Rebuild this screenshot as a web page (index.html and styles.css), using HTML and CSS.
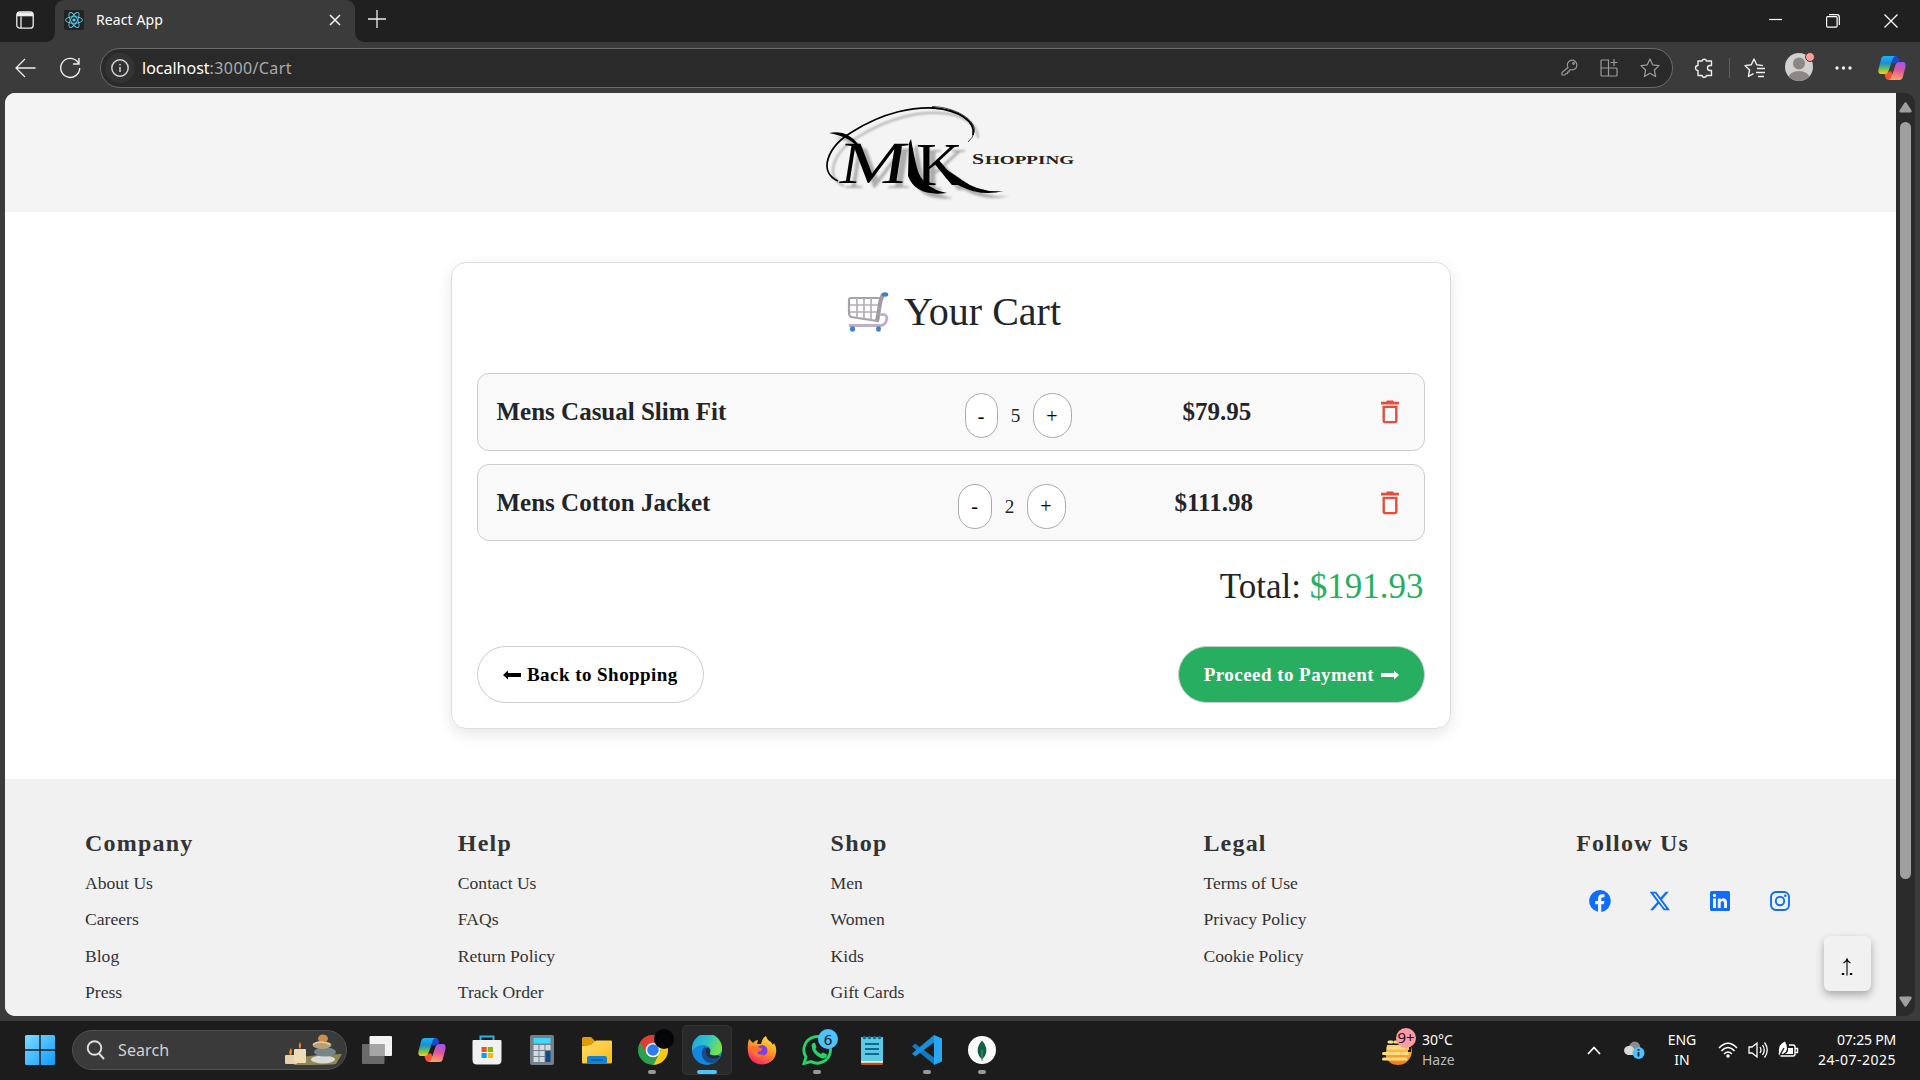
FILE: index.html
```html
<!DOCTYPE html>
<html lang="en">
<head>
<meta charset="utf-8">
<title>React App</title>
<link rel="stylesheet" href="styles.css">
</head>
<body>
<svg width="0" height="0" class="defs" aria-hidden="true">
  <defs>
    <linearGradient id="cpA" x1="0" y1="0" x2="0" y2="1"><stop offset="0" stop-color="#18b4f0"/><stop offset=".4" stop-color="#1a8ed8"/><stop offset=".65" stop-color="#55b86a"/><stop offset="1" stop-color="#f6d211"/></linearGradient>
    <linearGradient id="cpB" x1=".6" y1="0" x2=".4" y2="1"><stop offset="0" stop-color="#9a58f0"/><stop offset=".45" stop-color="#e2559c"/><stop offset="1" stop-color="#ffa45c"/></linearGradient>
    <linearGradient id="win" x1="0" y1="0" x2="1" y2="1"><stop offset="0" stop-color="#7edcff"/><stop offset="1" stop-color="#0f9bff"/></linearGradient>
    <linearGradient id="fold" x1="0" y1="0" x2="1" y2="1"><stop offset="0" stop-color="#ffdc6b"/><stop offset="1" stop-color="#fbbc14"/></linearGradient>
    <linearGradient id="edgeG" x1="0" y1="0" x2="1" y2=".4"><stop offset="0" stop-color="#1fa0ea"/><stop offset=".55" stop-color="#2cc3c9"/><stop offset="1" stop-color="#74e24e"/></linearGradient>
    <linearGradient id="fx" x1=".8" y1="0" x2=".3" y2="1"><stop offset="0" stop-color="#ffe847"/><stop offset=".45" stop-color="#ff9a22"/><stop offset="1" stop-color="#f71f6b"/></linearGradient>
    <linearGradient id="sun" x1="0" y1="0" x2="0" y2="1"><stop offset="0" stop-color="#ffd25a"/><stop offset="1" stop-color="#ee7a12"/></linearGradient>
    <symbol id="copilot" viewBox="0 0 28 26">
      <path d="M17 1 C20 1 20.500 3 21.500 6 L15 9 L11 1Z" fill="#1b49cf"/>
      <path d="M11 25 C8 25 7 22 6.500 19 L13 16 L17 25Z" fill="#f4542f"/>
      <path d="M6.500 1 H18 C15.500 1 14.800 3 14 6 L10.500 16 C9.800 18 9 19 6.500 19 H3.500 C.5 19 0 17 .6 14 L3 4.500 C3.600 2 4.600 1 6.500 1Z" fill="url(#cpA)"/>
      <path d="M21.500 25 H10 C12.500 25 13.200 23 14 20 L17.500 10 C18.200 8 19 7 21.500 7 H24.500 C27.500 7 28 9 27.400 12 L25 21.500 C24.400 24 23.400 25 21.500 25Z" fill="url(#cpB)"/>
    </symbol>
    <symbol id="trash" viewBox="0 0 18 24">
      <path d="M0 1.800 H5 L6 .6 H12 L13 1.800 H18 V4.500 H0Z M1.500 5.800 H16.500 V20.500 Q16.500 23.300 13.900 23.300 H4.100 Q1.500 23.300 1.500 20.500Z M3.900 8 V21 H14.100 V8Z" fill="#e74c3c" fill-rule="evenodd"/>
    </symbol>
  </defs>
</svg>

<div class="tabstrip">
  <svg class="tab-actions" width="18" height="18" viewBox="0 0 18 18" fill="none" stroke="#eee" stroke-width="1.300"><rect x=".8" y=".8" width="16.400" height="16.400" rx="3"/><path d="M5 5.500V17"/><path d="M1 3.300H17" stroke-width="4"/></svg>
  <div class="tab">
    <svg class="favicon" width="20" height="20" viewBox="0 0 20 20"><rect width="20" height="20" rx="2" fill="#222"/><g fill="none" stroke="#5ccfee" stroke-width=".9"><ellipse cx="10" cy="10" rx="8.500" ry="3.300"/><ellipse cx="10" cy="10" rx="8.500" ry="3.300" transform="rotate(60 10 10)"/><ellipse cx="10" cy="10" rx="8.500" ry="3.300" transform="rotate(120 10 10)"/></g><circle cx="10" cy="10" r="1.600" fill="#5ccfee"/></svg>
    <span class="tab-title">React App</span>
    <svg class="tab-close" width="12" height="12" viewBox="0 0 12 12" stroke="#f4f4f4" stroke-width="1.500"><path d="M1 1L11 11M11 1L1 11"/></svg>
  </div>
  <svg class="newtab" width="18" height="18" viewBox="0 0 18 18" stroke="#eee" stroke-width="1.300"><path d="M9 0V18M0 9H18"/></svg>
  <div class="winctl">
    <svg width="13" height="14" viewBox="0 0 13 14" stroke="#fff" stroke-width="1.200"><path d="M0 5.500H13"/></svg>
    <svg width="14" height="14" viewBox="0 0 14 14" fill="none" stroke="#fff" stroke-width="1.200"><rect x=".6" y="2.600" width="10.500" height="10.500" rx="1"/><path d="M3 .7H11Q13.300 .7 13.300 3V11"/></svg>
    <svg width="14" height="14" viewBox="0 0 14 14" stroke="#fff" stroke-width="1.300"><path d="M.5 .5L13.500 13.500M13.500 .5L.5 13.500"/></svg>
  </div>
</div>

<div class="toolbar">
  <svg class="back" width="21" height="20" viewBox="0 0 21 20" fill="none" stroke="#eee" stroke-width="1.300"><path d="M20.500 10H1M10 1L1 10L10 19"/></svg>
  <svg class="reload" width="21" height="22" viewBox="0 0 21 22" fill="none" stroke="#eee" stroke-width="1.400"><path d="M19.700 11A9.500 9.500 0 1 1 17.500 4.800L19 6.500M19 1V7H13"/></svg>
  <div class="address">
    <span class="info"><svg width="18" height="18" viewBox="0 0 18 18" fill="none" stroke="#ddd" stroke-width="1.400"><circle cx="9" cy="9" r="8.200"/><path d="M9 8V13M9 5V6.500"/></svg></span>
    <span class="url"><b>localhost</b>:3000/Cart</span>
    <span class="addr-icons">
      <svg width="17" height="17" viewBox="0 0 17 17" fill="none" stroke="#999" stroke-width="1.200"><path d="M7 8.500A4.800 4.800 0 1 1 9.500 10.500L8 11.500V13H6.500V14.500H5L4 16H1V13.500Z"/><circle cx="12.500" cy="4.500" r=".8"/></svg>
      <svg width="18" height="18" viewBox="0 0 18 18" fill="none" stroke="#999" stroke-width="1.200"><path d="M1 9V2Q1 1 2 1H8.500V17H2Q1 17 1 16V9H16Q17 9 17 10V16Q17 17 16 17H8.500M14 0V7M10.500 3.500H17.500"/></svg>
      <svg width="20" height="20" viewBox="0 0 20 20" fill="none" stroke="#999" stroke-width="1.300" stroke-linejoin="round"><path d="M10 1L12.700 6.800L19 7.600L14.400 12L15.600 18.500L10 15.300L4.400 18.500L5.600 12L1 7.600L7.300 6.800Z"/></svg>
    </span>
  </div>
  <svg class="puzzle" width="19" height="20" viewBox="0 0 19 20" fill="none" stroke="#eee" stroke-width="1.400" stroke-linejoin="round"><path d="M4 3H8A2.300 2.300 0 0 1 12.500 3H17.500V7.500H16A2.500 2.500 0 0 0 16 12.500H17.500V17.500H12.500A2.300 2.300 0 0 1 8 17.500H4V12.500A2.500 2.500 0 0 1 4 7.500Z"/></svg>
  <i class="sep"></i>
  <svg class="favs" width="21" height="20" viewBox="0 0 21 20" fill="none" stroke="#eee" stroke-width="1.400" stroke-linejoin="round"><path d="M19 7.600L12.700 6.800L10 1L7.300 6.800L1 7.600L5.600 12L4.400 18.500L9.500 15.600M13 10.500H21M12 14.500H21M14 18.500H20" /></svg>
  <svg class="avatar" width="30" height="30" viewBox="0 0 30 30"><clipPath id="av"><circle cx="14" cy="16" r="14"/></clipPath><g clip-path="url(#av)"><rect width="30" height="30" fill="#d2d0ce"/><circle cx="14" cy="12.500" r="6" fill="#8a8785"/><ellipse cx="14" cy="27" rx="10.500" ry="7" fill="#8a8785"/></g><circle cx="25" cy="6" r="4.500" fill="#ff9e9b" stroke="#3b3b3b"/></svg>
  <svg class="dots" width="17" height="4" viewBox="0 0 17 4" fill="#eee"><circle cx="2" cy="2" r="1.700"/><circle cx="8.500" cy="2" r="1.700"/><circle cx="15" cy="2" r="1.700"/></svg>
  <svg class="cp" width="28" height="26"><use href="#copilot"/></svg>
</div>

<div class="viewport">
  <div class="page">
    <header class="site-header">
      <svg class="logo" width="260" height="110" viewBox="820 95 260 110">
        <defs><filter id="soft" x="-10%" y="-10%" width="130%" height="130%"><feGaussianBlur stdDeviation="1.100"/></filter>
        <g id="mark">
          <path d="M829 133Q847 129 858 144L862 152Q852 137 829 133Z"/>
          <path d="M909 143L911 139Q914 156 917 168Q922 188 947 193Q916 197 908 176Z"/>
          <path d="M938 165Q948 170 962 180Q979 193 1004 191Q981 197 960 186L946 178Z"/>
          <text transform="translate(837 182.500) skewX(-9) scale(1.270 1)" font-size="60">M</text>
          <text transform="translate(916 184.500) scale(1.050 1)" font-size="62">K</text>
        </g></defs>
        <g class="logo-shadow" filter="url(#soft)">
          <use href="#mark" x="6" y="5"/>
          <path d="M844 186C824 177 833 152 858 137C891 116 921 112 940 113C962 114 978 124 978 138" fill="none" stroke-width="2"/>
        </g>
        <use href="#mark"/>
        <path d="M838 181C818 172 827 147 852 132C885 111 915 107 934 108C958 110 976 121 973 135" fill="none" stroke="#000" stroke-width="1.800"/>
        <path d="M932 106.500C955 107 977 120 974 132Q973 138 968 142" fill="none" stroke="#000" stroke-width=".7"/>
        <g class="logo-word"><text x="972" y="163.500" font-size="15" textLength="12" lengthAdjust="spacingAndGlyphs">S</text><text x="985" y="163.500" font-size="12.500" textLength="89" lengthAdjust="spacingAndGlyphs">HOPPING</text></g>
      </svg>
    </header>

    <main class="cart">
      <h1 class="cart-title">
        <svg class="cart-icon" width="42" height="40" viewBox="0 0 42 40" fill="none">
          <path d="M4 6H34L31 29L4 25Q2 24 2 20V8Q2 6 4 6Z" stroke="#a7a1aa" stroke-width="2.200"/>
          <path d="M10 6V26M17 6V27M24 6V28M3 13H32M3 20H31" stroke="#b5afb8" stroke-width="1.700"/>
          <path d="M36 2L33.500 9L30 29" stroke="#a19ba5" stroke-width="4"/>
          <path d="M33 23Q39 21 40 26Q39 33 34 33.500H2" stroke="#bdb0c8" stroke-width="2.800"/>
          <ellipse cx="38" cy="2.500" rx="3.300" ry="2.200" fill="#3f7fcb"/><ellipse cx="5.500" cy="37" rx="2.600" ry="2.800" fill="#3f7fcb"/><ellipse cx="31.500" cy="37" rx="2.400" ry="2.800" fill="#3f7fcb"/>
        </svg>
        Your Cart
      </h1>
      <ul class="items">
        <li class="item item-first">
          <span class="name">Mens Casual Slim Fit</span>
          <span class="qty"><button>-</button><span>5</span><button>+</button></span>
          <span class="price">$79.95</span>
          <svg class="remove" width="18" height="24"><use href="#trash"/></svg>
        </li>
        <li class="item item-second">
          <span class="name">Mens Cotton Jacket</span>
          <span class="qty"><button>-</button><span>2</span><button>+</button></span>
          <span class="price">$111.98</span>
          <svg class="remove" width="18" height="24"><use href="#trash"/></svg>
        </li>
      </ul>
      <h2 class="total">Total: <span>$191.93</span></h2>
      <div class="actions">
        <button class="btn"><svg width="18" height="10" viewBox="0 0 18 10"><path d="M0 5L5 .5V3H18V7H5V9.500Z"/></svg>Back to Shopping</button>
        <button class="btn btn-pay">Proceed to Payment<svg width="18" height="10" viewBox="0 0 18 10"><path d="M18 5L13 .5V3H0V7H13V9.500Z"/></svg></button>
      </div>
    </main>

    <footer class="site-footer">
      <section><h3>Company</h3><a>About Us</a><a>Careers</a><a>Blog</a><a>Press</a></section>
      <section><h3>Help</h3><a>Contact Us</a><a>FAQs</a><a>Return Policy</a><a>Track Order</a></section>
      <section><h3>Shop</h3><a>Men</a><a>Women</a><a>Kids</a><a>Gift Cards</a></section>
      <section><h3>Legal</h3><a>Terms of Use</a><a>Privacy Policy</a><a>Cookie Policy</a></section>
      <section><h3>Follow Us</h3>
        <div class="social">
          <svg width="24" height="24" viewBox="0 0 24 24"><path d="M12 1A11 11 0 0 0 10 22.800V15.300H7.200V12H10V9.600C10 6.800 11.700 5.300 14.200 5.300C15.400 5.300 16.500 5.500 16.500 5.500V8.200H15.200C13.800 8.200 13.300 9.100 13.300 10V12H16.400L15.900 15.300H13.300V22.900A11 11 0 0 0 12 1Z"/></svg>
          <svg width="24" height="24" viewBox="0 0 24 24"><path d="M17.700 2.700H20.800L14 10.500L22 21.300H15.700L10.800 14.800L5.100 21.300H2L9.300 13L1.700 2.700H8.100L12.600 8.600ZM16.600 19.400H18.300L7.200 4.500H5.400Z"/></svg>
          <svg width="24" height="24" viewBox="0 0 24 24"><path fill-rule="evenodd" d="M3.500 2H20.500Q22 2 22 3.500V20.500Q22 22 20.500 22H3.500Q2 22 2 20.500V3.500Q2 2 3.500 2ZM5 9.500V19H8V9.500ZM6.500 4.800A1.700 1.700 0 1 0 6.500 8.200A1.700 1.700 0 1 0 6.500 4.800ZM9.800 9.500V19H12.700V14.300C12.700 11.200 16 11.500 16 14.300V19H19V13.200C19 8.500 14.200 8.500 12.700 10.800V9.500Z"/></svg>
          <svg width="24" height="24" viewBox="0 0 24 24"><g fill="none" stroke="#0d6efd" stroke-width="1.900"><rect x="3" y="3" width="18" height="18" rx="5"/><circle cx="12" cy="12" r="4.200"/></g><circle cx="17.300" cy="6.700" r="1.300"/></svg>
        </div>
      </section>
    </footer>
    <button class="to-top"><svg width="12" height="18" viewBox="0 0 12 18" fill="none" stroke="#000"><path d="M6 17.500V1M2.500 5Q5 4 6 1Q7 4 9.500 5" stroke-width="1.100"/><path d="M.8 16H3.200M8.800 16H11.200" stroke-width="2.200"/></svg></button>
  </div>
  <div class="scrollbar">
    <svg width="13" height="11" viewBox="0 0 13 11"><path d="M5.300 1Q6.500 -.5 7.700 1L12.500 8.500Q13 10.500 11.500 10.500H1.500Q0 10.500 .5 8.500Z" fill="#9f9f9f"/></svg>
    <i class="thumb"></i>
    <svg width="13" height="11" viewBox="0 0 13 11"><path d="M5.300 10Q6.500 11.500 7.700 10L12.500 2.500Q13 .5 11.500 .5H1.500Q0 .5 .5 2.500Z" fill="#9f9f9f"/></svg>
  </div>
</div>

<div class="taskbar">
  <svg class="start" width="30" height="30" viewBox="0 0 30 30" fill="url(#win)"><path d="M1.500 0H14.300V14.300H0V1.500Q0 0 1.500 0ZM15.700 0H28.500Q30 0 30 1.500V14.300H15.700ZM0 15.700H14.300V30H1.500Q0 30 0 28.500ZM15.700 15.700H30V28.500Q30 30 28.500 30H15.700Z"/></svg>
  <div class="search">
    <svg width="20" height="20" viewBox="0 0 20 20" fill="none" stroke="#ddd" stroke-width="1.900"><circle cx="8.500" cy="8" r="6.800"/><path d="M13 13.500L18 19"/></svg>
    <span>Search</span>
    <svg class="spa" width="58" height="32" viewBox="0 0 58 32">
      <path d="M8 24L34 21L58 20L52 30Q48 31 10 31Z" fill="#8d8657"/>
      <rect x="1" y="21" width="12" height="9" rx="1" fill="#e5d3b0"/><rect x="10" y="15" width="12" height="14" rx="1" fill="#efdcb6"/>
      <path d="M6 21Q4 18 7 14Q9 18 7 21ZM16 15Q13.500 12 16 8Q18 12 16 15Z" fill="#f58a24"/>
      <ellipse cx="39" cy="25.500" rx="12" ry="4" fill="#d9d9d6"/><ellipse cx="41" cy="18" rx="11" ry="4.500" fill="#76878b"/><ellipse cx="38" cy="11" rx="9.500" ry="4" fill="#b59f76"/><ellipse cx="39" cy="4.500" rx="5" ry="4" fill="#cf8f49"/>
      <path d="M29 10.500Q36 5.500 46 10.500" fill="none" stroke="#e5cf9f" stroke-width="1.500"/>
    </svg>
  </div>
  <div class="apps">
    <span class="app"><svg width="30" height="28" viewBox="0 0 30 28"><rect x="7.500" width="22.500" height="20" rx="1" fill="#f3f3f3"/><rect y="8" width="22.500" height="20" rx="1" fill="#6a6a6a"/><rect x="7.500" y="8" width="15" height="12" fill="#a5a5a5"/></svg></span>
    <span class="app"><svg width="28" height="26"><use href="#copilot"/></svg></span>
    <span class="app"><svg width="30" height="30" viewBox="0 0 30 30"><path d="M8.500 6V1.500H21.500V6" fill="none" stroke="#2cb2e8" stroke-width="2"/><path d="M.5 6Q.5 5 1.500 5H28.500Q29.500 5 29.500 6V25Q29.500 29.500 25 29.500H5Q.5 29.500 .5 25Z" fill="#f1f1f1"/><path d="M9.500 12H14.700V17H9.500Z" fill="#f25022"/><path d="M15.700 12H21V17H15.700Z" fill="#7fba00"/><path d="M9.500 18H14.700V23H9.500Z" fill="#00a4ef"/><path d="M15.700 18H21V23H15.700Z" fill="#ffb900"/></svg></span>
    <span class="app"><svg width="24" height="30" viewBox="0 0 24 30"><rect width="24" height="30" rx="2" fill="#76808b"/><rect x="3.500" y="3" width="17" height="5.500" fill="#41d7f8"/><g fill="#d3dae1"><path d="M3.500 10H8.500V15H3.500ZM9.500 10H14.500V15H9.500ZM15.500 10H20.500V15H15.500ZM3.500 16H8.500V21H3.500ZM9.500 16H14.500V21H9.500ZM3.500 22H8.500V27H3.500ZM9.500 22H14.500V27H9.500Z"/></g><path d="M15.500 16H20.500V27H15.500Z" fill="#114a8b"/></svg></span>
    <span class="app"><svg width="30" height="27" viewBox="0 0 30 27"><path d="M0 8V1.500Q0 0 1.500 0H9L13 4V8Z" fill="#e09c06"/><path d="M0 8.500L9 8L14 3.500H29Q30 3.500 30 4.500V25.500Q30 26.500 29 26.500H1Q0 26.500 0 25.500Z" fill="url(#fold)"/><path d="M5 26.500V21Q5 19 7 19H23Q25 19 25 21V26.500Z" fill="#1382d3"/><path d="M9 23H21" stroke="#0a559c" stroke-width="1.300"/></svg></span>
    <span class="app run"><svg class="chrome" width="38" height="38" viewBox="0 0 38 38"><circle cx="16" cy="22" r="15" fill="#2da04d"/><path d="M3 14.500A15 15 0 0 1 29 14.500L16 22L9.500 25.700Z" fill="#e03e35"/><path d="M29 14.500A15 15 0 0 1 16.500 37L23 24Z" fill="#fcc813"/><path d="M16 15H30V22H20Z" fill="#fcc813"/><path d="M16 15H29L28 13L16 10Z" fill="#e03e35"/><circle cx="16" cy="22" r="7.300" fill="#fff"/><circle cx="16" cy="22" r="5.800" fill="#2f7bea"/><circle cx="27" cy="11" r="10" fill="#050507"/></svg></span>
    <span class="app active"><svg width="30" height="30" viewBox="0 0 30 30"><circle cx="15" cy="15" r="15" fill="#1487dc"/><path d="M0 13A15 15 0 0 1 30 14C30 18 27 20.500 23 20.500C19 20.500 17 19 18 17.500C20 15 18 10.500 12 10C6 10 1 13 0 17Z" fill="url(#edgeG)"/><path d="M12.500 12C7 18 10 27 20 28.500Q25 27 28 22.500C23 26 16 24 14 19Q13 16 15 13Z" fill="#124d93"/><path d="M14.500 13C12 18 15 24 22 24Q26 24 28 22Q27.500 20 25 20.300C20 21 16.500 19.500 18 17.500Q19 14.500 16 12.500Z" fill="#222e38"/></svg></span>
    <span class="app"><svg width="30" height="30" viewBox="0 0 30 30"><path d="M2 4L6 8Q8 5 11 5L10 9H14Q15 3 19 1Q20 5 24 7L26 10L27 8Q30 13 29 18C27 33 3 34 1 17Q0 10 2 4Z" fill="url(#fx)"/><path d="M9 13Q16 7 20 13Q22 20 15 21Q8 20 9 13Z" fill="#7c40e6"/><path d="M5 12Q9 10 13 13Q16 13 14 16L10 17Q12 21 17 19Q13 25 8 21Q4 18 5 12Z" fill="#ff7330"/></svg></span>
    <span class="app run"><svg class="wa" width="36" height="36" viewBox="0 0 36 36"><path d="M2 34.500L4 28A13.300 13.300 0 1 1 9 32.600Z" fill="none" stroke="#25d366" stroke-width="2.900"/><path d="M9.500 16Q11 13 13 14L14.500 18L13.500 20Q15 23.500 19 25L21 23.500L25 25.500Q25 30 20 29.500Q10 26 9.500 16Z" fill="#25d366"/><circle cx="26" cy="10" r="10" fill="#4cc2ff"/><text x="26" y="15.500" class="badge-text">6</text></svg></span>
    <span class="app"><svg width="22" height="30" viewBox="0 0 22 30"><path d="M0 2H22V26H0Z" fill="#5cc8e4"/><path d="M0 26H22V28H0Z" fill="#f2efe9"/><path d="M0 27.700H22V29Q22 30 21 30H1Q0 30 0 29Z" fill="#b1571d"/><path d="M4 9H18M4 14H18M4 19H18" stroke="#0d6b91" stroke-width="2"/><g fill="#0f6f93"><circle cx="3.500" cy="2.500" r="1.700"/><circle cx="8.500" cy="2.500" r="1.700"/><circle cx="13.500" cy="2.500" r="1.700"/><circle cx="18.500" cy="2.500" r="1.700"/></g></svg></span>
    <span class="app run"><svg width="30" height="30" viewBox="0 0 30 30"><path d="M3 8.500L22 22.500V29.500L0 11.500Z" fill="#1479bd"/><path d="M22 0V7.500L3 21.500L0 18.500Z" fill="#1a8fd6"/><path d="M22 0L30 3.500V26.500L22 30Z" fill="#2aa7f3"/></svg></span>
    <span class="app run"><svg width="28" height="28" viewBox="0 0 28 28"><circle cx="14" cy="14" r="14" fill="#fafafa"/><path d="M14 4.500Q21 12 17 20L14 23.500L11 20Q7 12 14 4.500Z" fill="#116149"/><path d="M14 14V25" stroke="#6b8f7f"/></svg></span>
  </div>
  <div class="weather">
    <svg width="34" height="40" viewBox="0 0 34 40"><path d="M5 18H28Q31 22 29 29Q25 38 16 38Q7 38 3.500 29Z" fill="url(#sun)"/><path d="M2 17H28V24H26M2 24V29.500H4" fill="none" stroke="#1c1c1c" stroke-width="2"/><path d="M7 15H10M13 15H20M6 21H22M1.500 26.500H17M20 26.500H25M1.500 32H24" stroke="#ffdb82" stroke-width="3" stroke-linecap="round"/><circle cx="24" cy="11" r="10" fill="#ff99a4"/><text x="24" y="16" class="badge-text">9+</text></svg>
    <p>30°C<br><span>Haze</span></p>
  </div>
  <div class="tray">
    <svg class="chev" width="14" height="9" viewBox="0 0 14 9" fill="none" stroke="#fff" stroke-width="1.800"><path d="M1 8L7 1.500L13 8"/></svg>
    <svg class="cloud" width="21" height="18" viewBox="0 0 21 18"><path d="M5 5Q8 -1 13 1Q17 3 16 9L9 12Z" fill="#8b8b8b"/><path d="M4 14Q0 13 0 9Q1 5 5 5Q8 4 10 8L14 14Z" fill="#d9d9d9"/><circle cx="14.500" cy="12" r="6" fill="#4cc2ff"/><path d="M14.500 11V15.500M14.500 8V9.700" stroke="#123" stroke-width="1.800"/></svg>
    <p class="lang">ENG<br>IN</p>
    <svg class="wifi" width="20" height="16" viewBox="0 0 20 16" fill="none" stroke="#fff" stroke-width="1.500"><path d="M1 6Q10 -3.500 19 6M3.500 9Q10 2 16.500 9M6 12Q10 8 14 12"/><circle cx="10" cy="14" r="1" fill="#fff"/></svg>
    <svg class="vol" width="20" height="18" viewBox="0 0 20 18" fill="none" stroke="#fff" stroke-width="1.300"><path d="M1 6H4L9 2V16L4 12H1ZM12 6Q14 9 12 12M14.500 4Q18 9 14.500 14M16.500 1.500Q22 9 16.500 16.500"/></svg>
    <svg class="bat" width="21" height="18" viewBox="0 0 21 18" fill="none" stroke="#fff" stroke-width="1.400"><path d="M11 4H15Q17 4 17 6V13Q17 15 15 15H4Q1 15 1.500 12M17.500 7.500H19.500V11.500H17.500"/><path d="M1 12Q0 3 7 .5Q12 9 5 13ZM10 7H15V13H7Q11 11 10 7Z" fill="#fff" stroke="none"/><path d="M1 16L6 7" stroke="#1c1c1c"/></svg>
    <p class="clock">07:25 PM<br><span>24-07-2025</span></p>
  </div>
</div>
</body>
</html>
```
FILE: styles.css
```css
* { box-sizing: border-box; }
body { margin: 0; height: 1080px; overflow: hidden; display: flex; flex-direction: column; background: #3b3b3b; font-family: "Noto Sans", "Open Sans", sans-serif; color: #fff; }
svg { display: block; flex: none; }
.defs { position: absolute; }
p { margin: 0; }

/* Browser chrome */
.tabstrip { height: 42px; flex: none; background: #202020; display: flex; align-items: center; }
.tab-actions { margin: -2px 0 0 16px; }
.tab { align-self: stretch; width: 300px; margin-left: 21px; padding: 0 14px 2px 9px; background: #3b3b3b; border-radius: 9px 9px 0 0; display: flex; align-items: center; position: relative; }
.tab::before, .tab::after { content: ""; position: absolute; bottom: 0; width: 9px; height: 9px; }
.tab::before { left: -9px; background: radial-gradient(circle at 0 0, #202020 8.500px, #3b3b3b 9px); }
.tab::after { right: -9px; background: radial-gradient(circle at 100% 0, #202020 8.500px, #3b3b3b 9px); }
.tab-title { margin: -2px 0 0 12px; font-size: 14px; letter-spacing: .1px; flex: 1; }
.newtab { margin: -4px 0 0 13px; }
.winctl { margin: 0 22px 0 auto; display: flex; gap: 44px; }
.toolbar { height: 51px; flex: none; display: flex; align-items: center; }
.back { margin-left: 15px; }
.reload { margin-left: 24px; }
.address { width: 1573px; height: 40px; margin-left: 19px; border: 1px solid #6b6b6b; border-radius: 20px; background: #2a2a2a; display: flex; align-items: center; padding: 0 12px 0 4px; }
.info { width: 30px; height: 30px; border-radius: 50%; background: #333; display: grid; place-items: center; }
.url { margin-left: 7px; font-size: 16px; letter-spacing: .4px; color: #aaa; }
.url b { font-weight: 400; color: #fff; letter-spacing: 0; }
.addr-icons { margin-left: auto; display: flex; align-items: center; gap: 22px; }
.puzzle { margin-left: 21px; }
.sep { width: 1px; height: 20px; background: #5d5d5d; margin-left: 16px; }
.favs { margin-left: 14px; }
.avatar { margin: -3px 0 0 20px; }
.dots { margin-left: 20px; }
.cp { margin-left: 26px; }

/* Web page */
.viewport { height: 923px; flex: none; margin: 0 5px 5px; border-radius: 10px; overflow: hidden; display: flex; }
.page { width: 1891px; background: #fff; color: #212529; font-family: "Liberation Serif", "Times New Roman", serif; position: relative; overflow: hidden; }
.scrollbar { width: 19px; background: #2b2b2b; display: flex; flex-direction: column; align-items: center; padding: 9px 0 9px; }
.thumb { width: 11px; height: 757px; margin: 9px 0 auto; border-radius: 6px; background: #9f9f9f; }
.site-header { height: 119px; background: #f4f4f4; padding: 2px 0 0 815px; }
.logo { font-family: "Liberation Serif", serif; }
.logo-word { font-weight: 700; fill: #222; }
.logo-shadow { fill: #888; stroke: #888; stroke-width: 0; opacity: .65; }
.cart { width: 1000px; height: 467px; margin: 50px auto; border: 1px solid #ddd; border-radius: 15px; padding: 25px; box-shadow: 0 5px 15px rgba(0,0,0,.1); }
.cart-title { height: 48px; margin: 0 0 37px; font-size: 40px; font-weight: 400; line-height: 48px; display: flex; justify-content: center; gap: 15px; }
.cart-icon { margin: 4px 0 0 7px; }
.items { list-style: none; margin: 0; padding: 0; display: flex; flex-direction: column; gap: 13px; }
.item { height: 78px; border: 1px solid #ccc; border-radius: 12px; background: #f9f9f9; padding: 0 25px 0 19px; display: flex; align-items: center; }
.item-second { height: 77px; }
.name, .price { font-size: 25px; font-weight: 700; line-height: 38px; }
.item-first .name { width: 468px; }
.item-second .name { width: 461px; }
.item-second .name, .item-second .price { padding-top: 1px; }
.qty { display: flex; align-items: center; padding-top: 7px; font-size: 19.200px; }
.qty span { width: 35px; text-align: center; padding: 1px 0 0 1px; }
.qty button { width: 33px; height: 45px; padding: 1px 0 0; border: 1px solid #aaa; border-radius: 20px; background: #fff; color: #000; font: 20px "Liberation Serif", serif; }
.qty button:last-child { width: 39px; }
.item-second .qty button:first-child { width: 34px; }
.item-first .price { margin-left: 111px; }
.item-second .price { margin-left: 109px; }
.remove { margin-left: auto; }
.item-first .remove { margin-top: -1px; }
.total { margin: 25px 0 38px; height: 42px; font-size: 35px; line-height: 42px; font-weight: 400; text-align: right; padding-right: 1px; }
.total span { color: #27ae60; }
.actions { display: flex; justify-content: space-between; }
.btn { height: 57px; padding: 1px 25px 0; display: flex; align-items: center; gap: 6.500px; border: 1px solid #ccc; border-radius: 30px; background: #fff; color: #000; font: 700 19px "Liberation Serif", serif; letter-spacing: .45px; white-space: nowrap; }
.btn svg { fill: currentColor; }
.btn-pay { background: #27ae60; color: #fff; }
.site-footer { height: 260px; background: #f1f1f1; padding: 50px 0 0 80px; display: grid; grid-template-columns: repeat(5, 372.800px); color: #333; }
.site-footer h3 { margin: 0 0 12px; font-size: 24px; line-height: 29px; letter-spacing: 1.200px; }
.site-footer a { display: block; font-size: 17.600px; line-height: 26.400px; margin-bottom: 10px; }
.social { display: flex; gap: 36px; padding: 19px 0 0 12px; fill: #0d6efd; }
.to-top { position: absolute; left: 1819px; top: 843px; width: 47px; height: 55px; border: 0; border-radius: 6px; background: #f1f1f1; box-shadow: 0 4px 8px rgba(0,0,0,.3); display: grid; place-items: center; padding: 6px 1px 0 0; }

/* Desktop taskbar */
.taskbar { height: 59px; flex: none; background: #1c1c1c; display: flex; align-items: center; padding-bottom: 1px; }
.start { margin-left: 25px; }
.search { width: 275px; height: 40px; margin: 0 0 0 17px; border: 1px solid #505050; border-radius: 20px; background: #3a3a3a; display: flex; align-items: center; padding: 0 4px 0 13px; font-size: 16px; color: #d2d2d2; }
.search span { margin-left: 12px; letter-spacing: .1px; }
.spa { margin-left: auto; }
.apps { display: flex; gap: 5px; margin-left: 5px; }
.app { width: 50px; height: 50px; display: grid; place-items: center; position: relative; }
.active { background: #292929; border-radius: 5px; box-shadow: inset 0 0 0 1px #333; }
.run::after, .active::after { content: ""; position: absolute; bottom: 1px; left: 21px; width: 8px; height: 4px; border-radius: 2px; background: #999; }
.active::after { left: 15px; width: 20px; background: #4cc2ff; }
.chrome { margin: -7px 0 0 7px; }
.wa { margin: -6px 0 0 6px; }
.badge-text { font: 15px "Noto Sans", sans-serif; text-anchor: middle; fill: #111; }
.weather { display: flex; align-items: center; gap: 6px; margin-left: 375px; font-size: 14px; line-height: 20px; }
.weather svg { margin-top: -6px; }
.weather span { color: #bbb; }
.tray { margin: 0 24px 0 auto; display: flex; align-items: center; font-size: 14px; line-height: 20px; }
.cloud { margin-left: 23px; }
.lang { width: 40px; margin-left: 17px; text-align: center; }
.wifi { margin-left: 16px; }
.vol { margin-left: 10px; }
.bat { margin-left: 10px; }
.clock { width: 90px; margin-left: 7px; text-align: right; letter-spacing: -.2px; }
.clock span { letter-spacing: .5px; }
```
